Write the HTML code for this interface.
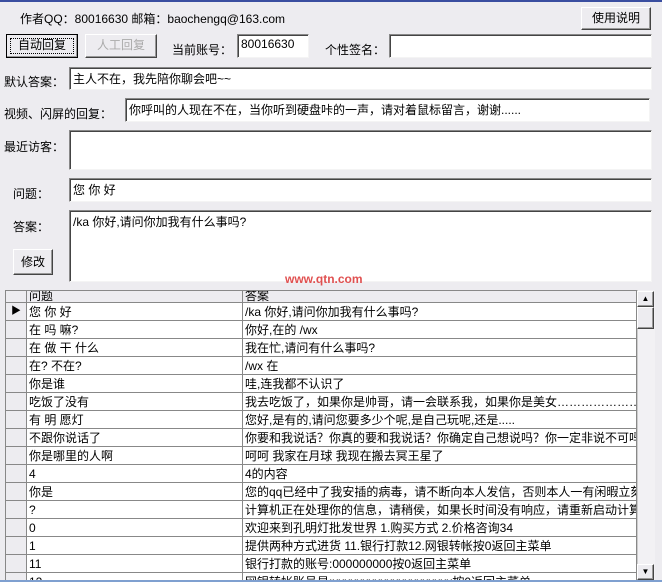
<html style="overflow:hidden"><head><style>
body{margin:0;width:662px;height:582px;background:#edecf0;font-family:"Liberation Sans","Noto Sans CJK SC",sans-serif;font-size:12px;color:#000;overflow:hidden}
#w{position:relative;width:662px;height:582px;overflow:hidden}
.a{position:absolute;white-space:nowrap}
.in{position:absolute;background:#fff;border:1px solid;border-color:#888 #f4f4f4 #f4f4f4 #888;box-shadow:inset 1px 1px 0 #444;box-sizing:border-box;padding:2px 3px;white-space:nowrap;overflow:hidden}
.btn{position:absolute;background:#edecf0;border:1px solid;border-color:#fff #444 #444 #fff;box-shadow:inset -1px -1px 0 #999;box-sizing:border-box;text-align:center;line-height:20px}
#tw{position:absolute;left:5px;top:290px;width:632px;height:290px;overflow:hidden}
table{border-collapse:collapse;background:#fff;table-layout:fixed}
td{border:1px solid #888;height:18px;box-sizing:border-box;padding:0 2px;white-space:nowrap;overflow:hidden;line-height:16px;font-size:12px}
tr{height:18px}
td.i{background:#edecf0;width:17px;padding:0}
tr.h{height:12px}
tr.h td{height:12px;line-height:11px;background:#edecf0}
</style></head><body><div id="w">
<div style="position:absolute;left:0;top:0;width:662px;height:2px;background:#3a4ea0"></div>
<div class="a" style="left:20px;top:10px">作者QQ：80016630 邮箱：baochengq@163.com</div>
<div class="btn" style="left:581px;top:7px;width:70px;height:23px">使用说明</div>
<div class="btn" style="left:6px;top:34px;width:72px;height:24px;border:1px solid #000;outline:1px dotted #000;outline-offset:-5px">自动回复</div>
<div class="btn" style="left:85px;top:34px;width:72px;height:24px;color:#aaa">人工回复</div>
<div class="a" style="left:172px;top:41px">当前账号：</div>
<div class="in" style="left:237px;top:34px;width:72px;height:24px">80016630</div>
<div class="a" style="left:325px;top:41px">个性签名：</div>
<div class="in" style="left:389px;top:34px;width:263px;height:24px"></div>
<div class="a" style="left:4px;top:73px">默认答案：</div>
<div class="in" style="left:69px;top:67px;width:583px;height:23px">主人不在，我先陪你聊会吧~~</div>
<div class="a" style="left:4px;top:105px">视频、闪屏的回复：</div>
<div class="in" style="left:125px;top:98px;width:525px;height:24px">你呼叫的人现在不在，当你听到硬盘咔的一声，请对着鼠标留言，谢谢......</div>
<div class="a" style="left:4px;top:138px">最近访客：</div>
<div class="in" style="left:69px;top:130px;width:583px;height:40px"></div>
<div class="a" style="left:13px;top:185px">问题：</div>
<div class="in" style="left:69px;top:178px;width:583px;height:24px">您 你 好</div>
<div class="a" style="left:13px;top:218px">答案：</div>
<div class="in" style="left:69px;top:210px;width:583px;height:72px">/ka 你好,请问你加我有什么事吗?</div>
<div class="btn" style="left:13px;top:249px;width:40px;height:26px;line-height:24px">修改</div>
<div class="a" style="left:285px;top:272px;color:#e05050;font-weight:bold">www.qtn.com</div>
<div id="tw"><table style="width:632px">
<colgroup><col style="width:21px"><col style="width:216px"><col></colgroup>
<tr class="h"><td class="i"></td><td>问题</td><td>答案</td></tr>
<tr><td class="i" style="font-size:10px;text-align:center">▶</td><td>您 你 好</td><td>/ka 你好,请问你加我有什么事吗?</td></tr>
<tr><td class="i"></td><td>在 吗 嘛?</td><td>你好,在的 /wx</td></tr>
<tr><td class="i"></td><td>在 做 干 什么</td><td>我在忙,请问有什么事吗?</td></tr>
<tr><td class="i"></td><td>在? 不在?</td><td>/wx 在</td></tr>
<tr><td class="i"></td><td>你是谁</td><td>哇,连我都不认识了</td></tr>
<tr><td class="i"></td><td>吃饭了没有</td><td>我去吃饭了，如果你是帅哥，请一会联系我，如果你是美女……………………</td></tr>
<tr><td class="i"></td><td>有 明 愿灯</td><td>您好,是有的,请问您要多少个呢,是自己玩呢,还是.....</td></tr>
<tr><td class="i"></td><td>不跟你说话了</td><td>你要和我说话？你真的要和我说话？你确定自己想说吗？你一定非说不可吗</td></tr>
<tr><td class="i"></td><td>你是哪里的人啊</td><td>呵呵 我家在月球 我现在搬去冥王星了</td></tr>
<tr><td class="i"></td><td>4</td><td>4的内容</td></tr>
<tr><td class="i"></td><td>你是</td><td>您的qq已经中了我安插的病毒，请不断向本人发信，否则本人一有闲暇立刻</td></tr>
<tr><td class="i"></td><td>?</td><td>计算机正在处理你的信息，请稍侯，如果长时间没有响应，请重新启动计算</td></tr>
<tr><td class="i"></td><td>0</td><td>欢迎来到孔明灯批发世界 1.购买方式 2.价格咨询34</td></tr>
<tr><td class="i"></td><td>1</td><td>提供两种方式进货 11.银行打款12.网银转帐按0返回主菜单</td></tr>
<tr><td class="i"></td><td>11</td><td>银行打款的账号:000000000按0返回主菜单</td></tr>
<tr><td class="i"></td><td>12</td><td>网银转帐账号是:xxxxxxxxxxxxxxxxxxxx按0返回主菜单</td></tr>
</table></div>
<div style="position:absolute;left:637px;top:290px;width:17px;height:290px;background:#f2f1f4;border-left:1px solid #ccc"></div>
<div class="btn" style="left:637px;top:291px;width:17px;height:16px;font-size:8px;line-height:14px">▲</div>
<div class="btn" style="left:637px;top:307px;width:17px;height:22px"></div>
<div class="btn" style="left:637px;top:564px;width:17px;height:16px;font-size:8px;line-height:14px">▼</div>
<div style="position:absolute;left:0;top:580px;width:662px;height:2px;background:#7fa0d0"></div>
</div></body></html>
